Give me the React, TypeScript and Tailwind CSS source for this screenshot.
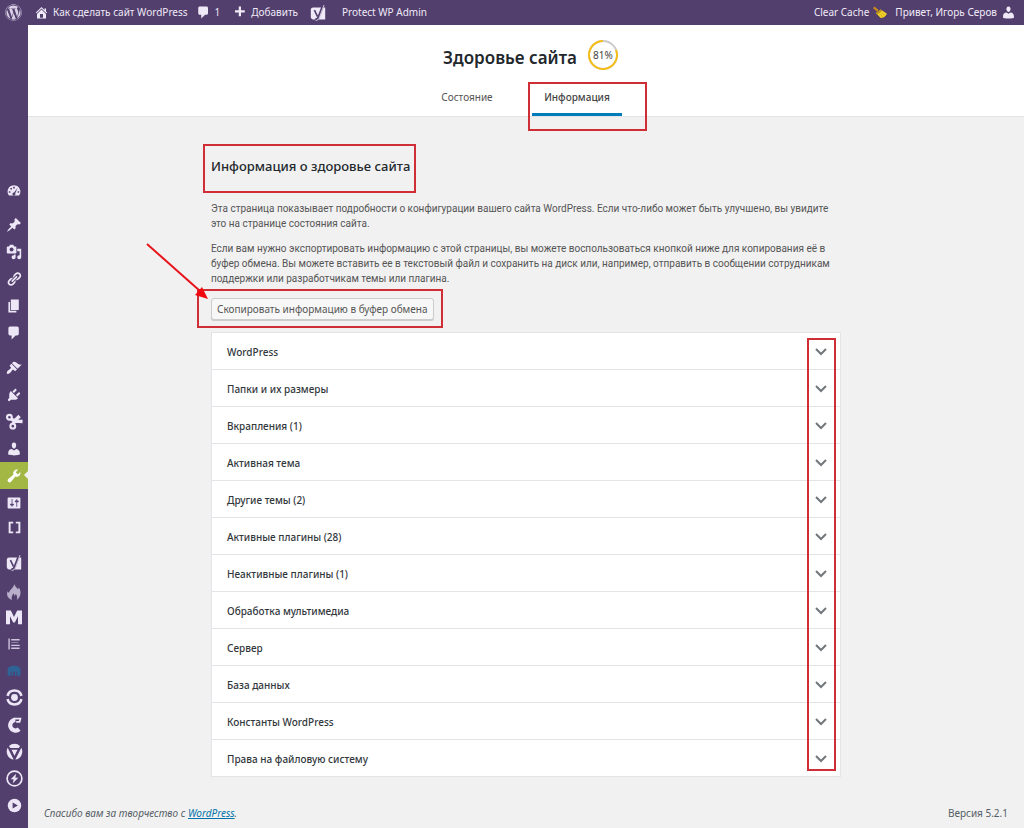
import type { ReactNode } from "react";
import { useState } from "react";
import { FaWordpress } from "react-icons/fa";

function cn(...classes: Array<string | false | null | undefined>) {
  return classes.filter(Boolean).join(" ");
}

const paths = {
  home: "M16 8.5l1.53 1.53-1.06 1.06L10 4.6l-6.47 6.49-1.06-1.06L10 2.5l4 4v-2h2v4zm-6-2.46l6 5.99V18H4v-5.97zM12 17v-5H8v5h4z",
  comment: "M5 2h9c1.1 0 2 .9 2 2v7c0 1.1-.9 2-2 2h-2l-5 5v-5H5c-1.1 0-2-.9-2-2V4c0-1.1.9-2 2-2z",
  plus: "M17 7v3h-5v5H9v-5H4V7h5V2h3v5h5z",
  user: "M10 9.25c-2.27 0-2.73-3.44-2.73-3.44C7 4.02 7.82 2 9.97 2c2.16 0 2.98 2.02 2.71 3.81 0 0-.41 3.44-2.68 3.44zm0 2.57L12.72 10c2.39 0 4.52 2.33 4.52 4.53v2.49s-3.65 1.13-7.24 1.13c-3.65 0-7.24-1.13-7.24-1.13v-2.49c0-2.25 1.94-4.48 4.47-4.48z",
  dashboard:
    "M3.76 17h12.48C17.58 15.37 18 13.58 18 12c0-4.42-3.58-8-8-8s-8 3.58-8 8c0 1.58.42 3.37 1.76 5zM9 6h2v2H9zM5.5 7.5h2v2h-2zM14.6 7.3l-3 6.7a1.9 1.9 0 1 1-1.5-1zM3.5 11.5h2v2h-2zM14.5 11.5h2v2h-2z",
  pin: "M10.44 3.02l1.82-1.82 6.36 6.35-1.83 1.82c-1.05-.68-2.48-.57-3.41.36l-.75.75c-.92.93-1.04 2.35-.35 3.41l-1.83 1.82-2.41-2.41-2.8 2.79c-.42.42-3.38 2.71-3.8 2.29s1.86-3.39 2.28-3.81l2.79-2.79L4.1 9.36l1.83-1.82c1.05.69 2.48.57 3.4-.36l.75-.75c.93-.92 1.05-2.35.36-3.41z",
  media:
    "M13 11V4c0-.55-.45-1-1-1h-1.67L9 1H5L3.67 3H2c-.55 0-1 .45-1 1v7c0 .55.45 1 1 1h10c.55 0 1-.45 1-1zM7 4.5c1.38 0 2.5 1.12 2.5 2.5S8.38 9.5 7 9.5 4.5 8.38 4.5 7 5.62 4.5 7 4.5zM14 6h5v10.5c0 1.38-1.12 2.5-2.5 2.5S14 17.88 14 16.5s1.12-2.5 2.5-2.5c.17 0 .34.02.5.05V9h-3V6zm-4 8.05V13h2v3.5c0 1.38-1.12 2.5-2.5 2.5S7 17.88 7 16.5 8.12 14 9.5 14c.17 0 .34.02.5.05z",
  link: "M17.74 2.76c1.68 1.69 1.68 4.41 0 6.1l-1.53 1.52c-1.12 1.12-2.7 1.47-4.14 1.09l2.62-2.61.76-.77.76-.76c.84-.84.84-2.2 0-3.04-.84-.85-2.2-.85-3.04 0l-.77.76-3.38 3.38c-.37-1.44-.02-3.02 1.1-4.14l1.52-1.53c1.69-1.68 4.42-1.68 6.1 0zM8.59 13.43l5.34-5.34c.42-.42.42-1.1 0-1.52-.44-.43-1.13-.39-1.53 0l-5.33 5.34c-.42.42-.42 1.1 0 1.52.44.43 1.13.39 1.52 0zm-.76 2.29l4.14-4.15c.38 1.44.03 3.02-1.09 4.14l-1.52 1.53c-1.69 1.68-4.41 1.68-6.1 0-1.68-1.68-1.68-4.42 0-6.1l1.53-1.52c1.12-1.12 2.7-1.47 4.14-1.1l-4.14 4.15c-.85.84-.85 2.2 0 3.05.84.84 2.2.84 3.04 0z",
  page: "M6 15V2h10v13H6zm-1 1h8v2H3V5h2v11z",
  brush:
    "M14.48 11.06L7.41 3.99l1.5-1.5c.5-.56 2.3-.47 3.51.32 1.21.8 1.43 1.28 2.91 2.1 1.18.64 2.45 1.26 4.45.85zm-.71.71L6.7 4.7 4.93 6.47c-.39.39-.39 1.02 0 1.41l1.06 1.06c.39.39.39 1.03 0 1.42-.6.6-1.43 1.11-2.21 1.69-.35.26-.7.53-1.01.84C1.43 14.23.4 16.08 1.4 17.07c.99 1 2.84-.03 4.18-1.36.31-.31.58-.66.85-1.02.57-.78 1.08-1.61 1.69-2.21.39-.39 1.02-.39 1.41 0l1.06 1.06c.39.39 1.02.39 1.41 0z",
  plug: "M13.11 4.36L9.87 7.6 8 5.73l3.24-3.24c.35-.34 1.05-.2 1.56.32.52.51.66 1.21.31 1.55zm-8 1.77l.91-1.12 9.01 9.01-1.19.84c-.71.71-2.63 1.16-3.82 1.16H6.14L4.9 17.26c-.59.59-1.54.59-2.12 0-.59-.58-.59-1.53 0-2.12l1.24-1.24v-3.88c0-1.13.4-3.19 1.09-3.89zm7.26 3.97l3.24-3.24c.34-.35 1.04-.21 1.55.31.52.51.66 1.21.31 1.55l-3.24 3.25z",
  wrench:
    "M16.68 9.77c-1.34 1.34-3.3 1.67-4.95.99l-5.41 6.52c-.99.99-2.59.99-3.58 0s-.99-2.59 0-3.57l6.52-5.42c-.68-1.65-.35-3.61.99-4.95 1.28-1.28 3.12-1.62 4.72-1.06l-2.89 2.89 2.82 2.82 2.86-2.87c.53 1.58.18 3.39-1.08 4.65z",
  sliders:
    "M18 16V4c0-.55-.45-1-1-1H3c-.55 0-1 .45-1 1v12c0 .55.45 1 1 1h14c.55 0 1-.45 1-1zM8 11h1c.55 0 1 .45 1 1s-.45 1-1 1H8v1.5c0 .28-.22.5-.5.5s-.5-.22-.5-.5V13H6c-.55 0-1-.45-1-1s.45-1 1-1h1V5.5c0-.28.22-.5.5-.5s.5.22.5.5V11zm5-2h-1c-.55 0-1-.45-1-1s.45-1 1-1h1V5.5c0-.28.22-.5.5-.5s.5.22.5.5V7h1c.55 0 1 .45 1 1s-.45 1-1 1h-1v5.5c0 .28-.22.5-.5.5s-.5-.22-.5-.5V9z",
  brackets: "M1 1h7v3H4v12h4v3H1zM12 1h7v18h-7v-3h4V4h-4z",
  flame:
    "M10.5 0c.5 3 3 4.5 4.5 6.5.6-.6.9-1.3 1-2 3 4 3.5 11-2.5 15.5 1-3.5.4-6-1.5-7.5-.2 1.2-.6 2-1.3 2.6-.2-1.6-.7-2.7-1.7-3.6-.5 2.5-2.7 4-1.5 8.5C1.5 17.5.5 13.5 2 9c.5.9 1.1 1.5 1.9 1.9C4.5 7 9.5 5 10.500 0z",
  monster: "M0 19V2h6l4 8 4-8h6v17h-5V9l-4 8H9L5 9v10z",
  toc: "M2 2h2v16H2zM6 3h12v2H6zM6 7h10v1H6zM6 11h12v2H6zM6 15h12v2H6z",
  cover: "M4 5c3-2 9-2 12 0 2 1 2 3 2 5v6h-4v-5h-1v5h-2v-5H9v5H7v-5H6v5H2v-6c0-2 0-4 2-5z",
};

type IconName = keyof typeof paths;

function Icon({ name, size = 16 }: { name: IconName; size?: number }) {
  return (
    <svg
      viewBox="0 0 20 20"
      width={size}
      height={size}
      fill="currentColor"
      fillRule="evenodd"
      className="shrink-0"
      aria-hidden="true"
    >
      <path d={paths[name]} />
    </svg>
  );
}

function YoastIcon() {
  return (
    <svg viewBox="0 0 20 20" width="16" height="16" className="shrink-0" aria-hidden="true">
      <path d="M4 3h15v15H4c-1.5 0-3-1-3-3V6c0-2 1.5-3 3-3z" fill="currentColor" />
      <path d="M16.5 0L11 14.5c-.9 2.5-2 3.8-4.5 4" fill="none" stroke="#523f6d" strokeWidth="3" />
      <path d="M17.5 0L12 15c-.9 2.5-2.5 4.3-5 4.5" fill="none" stroke="currentColor" strokeWidth="1" />
      <path d="M5.5 6.5l4 8" fill="none" stroke="#523f6d" strokeWidth="2" />
    </svg>
  );
}

function ScissorsIcon() {
  return (
    <svg viewBox="0 0 20 20" width="17" height="17" fill="none" stroke="currentColor" aria-hidden="true">
      <circle cx="4" cy="5" r="2.8" strokeWidth="2.5" />
      <circle cx="8" cy="15.5" r="2.8" strokeWidth="2.5" />
      <path d="M6 7l4.5 2.5 9 .5M8 13l2.5-4L16 3.5" strokeWidth="4" />
    </svg>
  );
}

function RoundelIcon() {
  return (
    <svg viewBox="0 0 20 20" width="17" height="17" fill="none" stroke="currentColor" aria-hidden="true">
      <path d="M1.8 8a8.5 8.5 0 0 1 16.4 0M1.8 12a8.5 8.5 0 0 0 16.4 0" strokeWidth="3" />
      <circle cx="10" cy="10" r="4" fill="currentColor" stroke="none" />
    </svg>
  );
}

function CrescentIcon() {
  return (
    <svg viewBox="0 0 20 20" width="17" height="17" fill="none" stroke="currentColor" aria-hidden="true">
      <path d="M15.5 15.5A6.3 6.3 0 1 1 11 4.5" strokeWidth="5" />
      <path d="M9 3h8l-1 4h-4" strokeWidth="2" />
    </svg>
  );
}

function TriangleIcon() {
  return (
    <svg viewBox="0 0 20 20" width="17" height="17" fill="currentColor" aria-hidden="true">
      <path d="M3.5 3.5a9.5 9.5 0 0 1 13 0L15 6H5z" />
      <path d="M2 5.5L9 19.5A9.5 9.5 0 0 1 2 5.5zM18 5.5L11 19.5A9.5 9.5 0 0 0 18 5.5z" />
      <path d="M6.5 8h7L10 15z" />
    </svg>
  );
}

function BoltIcon() {
  return (
    <svg viewBox="0 0 20 20" width="17" height="17" aria-hidden="true">
      <circle cx="10" cy="10" r="8.7" fill="none" stroke="currentColor" strokeWidth="2" />
      <path d="M12 4.5L5.5 11H9l-1 4.5L14.5 9H11z" fill="currentColor" />
    </svg>
  );
}

function PlayIcon() {
  return (
    <svg viewBox="0 0 20 20" width="15" height="15" aria-hidden="true">
      <circle cx="10" cy="10" r="9" fill="currentColor" />
      <path d="M7.5 6l7 4-7 4z" fill="#523f6d" />
    </svg>
  );
}

function BroomIcon() {
  return (
    <svg viewBox="0 0 20 20" width="14" height="14" className="shrink-0" aria-hidden="true">
      <path d="M1 2l6 5" stroke="#c98a1b" strokeWidth="3" />
      <path d="M4 10l7-5 9 6c-2 4-5 6-9 6z" fill="#f0cf26" />
      <path d="M4 10l7-5 2 2-7 5z" fill="#b8901d" />
      <path d="M11 12l3 4M13 10l3 3" stroke="#c9a51c" strokeWidth="1" />
    </svg>
  );
}

type MenuEntry = { label: string; icon: ReactNode; active?: boolean; className?: string };

const menuGroups: MenuEntry[][] = [
  [{ label: "Консоль", icon: <Icon name="dashboard" /> }],
  [
    { label: "Записи", icon: <Icon name="pin" /> },
    { label: "Медиафайлы", icon: <Icon name="media" /> },
    { label: "Ссылки", icon: <Icon name="link" /> },
    { label: "Страницы", icon: <Icon name="page" /> },
    { label: "Комментарии", icon: <Icon name="comment" /> },
  ],
  [
    { label: "Внешний вид", icon: <Icon name="brush" /> },
    { label: "Плагины", icon: <Icon name="plug" /> },
    { label: "Вкрапления", icon: <ScissorsIcon /> },
    { label: "Пользователи", icon: <Icon name="user" /> },
    { label: "Инструменты", icon: <Icon name="wrench" />, active: true },
    { label: "Настройки", icon: <Icon name="sliders" /> },
    { label: "Шорткоды", icon: <Icon name="brackets" size={13} />, className: "pb-1" },
  ],
  [
    { label: "SEO", icon: <YoastIcon /> },
    { label: "Кэш", icon: <Icon name="flame" />, className: "pt-1 text-[#b9aecb]" },
    { label: "Меню M", icon: <Icon name="monster" /> },
    { label: "Содержание", icon: <Icon name="toc" size={14} />, className: "text-[#cfc5de]" },
    { label: "Обложка", icon: <Icon name="cover" />, className: "text-[#2f6395]" },
    { label: "Резервные копии", icon: <RoundelIcon /> },
    { label: "Clearfy", icon: <CrescentIcon /> },
    { label: "Защита", icon: <TriangleIcon /> },
    { label: "Ускорение", icon: <BoltIcon /> },
    { label: "Свернуть меню", icon: <PlayIcon /> },
  ],
];

const sections = [
  "WordPress",
  "Папки и их размеры",
  "Вкрапления (1)",
  "Активная тема",
  "Другие темы (2)",
  "Активные плагины (28)",
  "Неактивные плагины (1)",
  "Обработка мультимедиа",
  "Сервер",
  "База данных",
  "Константы WordPress",
  "Права на файловую систему",
];

function AdminBar() {
  return (
    <header className="flex h-[25px] items-center justify-between bg-[#523f6d] pr-2 pl-[5px] whitespace-nowrap text-[#f0eaf8]">
      <nav className="flex items-center" aria-label="Панель инструментов">
        <a href="#about" aria-label="О WordPress">
          <FaWordpress className="size-[17px] text-[#d8cfe6]" />
        </a>
        <a href="#site" className="ml-3 flex items-center gap-1">
          <Icon name="home" size={15} />
          Как сделать сайт WordPress
        </a>
        <a href="#comments" className="ml-2 flex items-center gap-1">
          <Icon name="comment" size={15} />1
        </a>
        <a href="#new" className="ml-3 flex items-center gap-1">
          <Icon name="plus" size={15} />
          Добавить
        </a>
        <a href="#seo" className="ml-3" aria-label="SEO">
          <YoastIcon />
        </a>
        <a href="#protect" className="ml-4">
          Protect WP Admin
        </a>
      </nav>
      <div className="flex items-center gap-2">
        <a href="#cache" className="flex items-center gap-1">
          Clear Cache
          <BroomIcon />
        </a>
        <a href="#profile" className="flex items-center gap-1">
          Привет, Игорь Серов
          <Icon name="user" size={15} />
        </a>
      </div>
    </header>
  );
}

function SideMenu() {
  return (
    <nav className="w-7 shrink-0 bg-[#523f6d] pt-[151px] text-[#ece6f6]" aria-label="Главное меню">
      {menuGroups.map((group, index) => (
        <ul key={index} className="mb-2 last:-mt-[2px]">
          {group.map((item) => (
            <li key={item.label}>
              <a
                href="#menu"
                aria-label={item.label}
                className={cn(
                  "relative flex h-[27px] items-center justify-center",
                  item.active && "bg-[#a3b745] text-white",
                  item.className
                )}
              >
                {item.icon}
                {item.active && (
                  <span className="absolute top-[9px] right-0 border-y-4 border-r-4 border-y-transparent border-r-[#f1f1f1]" />
                )}
              </a>
            </li>
          ))}
        </ul>
      ))}
    </nav>
  );
}

function Score() {
  return (
    <div className="relative flex size-8 items-center justify-center">
      <svg viewBox="0 0 32 32" className="absolute inset-0" fill="none" strokeWidth="2" aria-hidden="true">
        <circle cx="16" cy="16" r="14" stroke="#ccc" />
        <circle
          cx="16"
          cy="16"
          r="14"
          stroke="#f5bd1a"
          pathLength={100}
          strokeDasharray="81 100"
          transform="rotate(-22 16 16)"
        />
      </svg>
      <span>81%</span>
    </div>
  );
}

// Red frame drawn over the part of the page it points at.
function Marker({ className }: { className: string }) {
  return <span className={cn("pointer-events-none absolute border-2 border-[#cf2e36]", className)} aria-hidden="true" />;
}

function PageHeader() {
  return (
    <div className="flex flex-col items-center border-b border-[#e2e4e7] bg-white pt-[14px]">
      <div className="flex items-center gap-[10px] pl-[10px]">
        <h1 className="pt-[5px] text-[17px] leading-[27px] font-semibold text-[#23282d]">Здоровье сайта</h1>
        <Score />
      </div>
      <nav className="mt-2 flex gap-5 pr-2" aria-label="Дополнительное меню">
        <a href="#status" className="flex h-[37px] w-[90px] justify-center pt-[10px] leading-4 text-[#555]">
          Состояние
        </a>
        <a
          href="#info"
          aria-current="page"
          className="relative flex h-[37px] w-[90px] justify-center border-b-[3px] border-[#007cba] pt-[10px] leading-4 font-medium text-[#444]"
        >
          Информация
          <Marker className="top-[3px] -right-[25px] -bottom-[18px] -left-1" />
        </a>
      </nav>
    </div>
  );
}

function HealthSections() {
  const [open, setOpen] = useState<string | null>(null);

  return (
    <div className="relative mt-3 border border-[#e2e4e7] bg-white">
      {sections.map((title) => (
        <h3 key={title} className="border-t border-[#e2e4e7] first:border-t-0">
          <button
            type="button"
            aria-expanded={open === title}
            onClick={() => setOpen(open === title ? null : title)}
            className="flex h-9 w-full items-center justify-between px-[15px] pt-[2px] text-left font-medium text-[#32373c]"
          >
            {title}
            <svg viewBox="0 0 12 8" className="-mr-[2px] h-2 w-3" fill="none" stroke="#72777c" strokeWidth="2" aria-hidden="true">
              <path d="M1 1l5 5 5-5" />
            </svg>
          </button>
        </h3>
      ))}
      <Marker className="top-[5px] right-1 bottom-[5px] w-[29px]" />
    </div>
  );
}

export default function App() {
  return (
    <div className="flex min-h-screen flex-col bg-[#f1f1f1] font-['Noto_Sans','Open_Sans',sans-serif] text-[10px] text-[#444]">
      <AdminBar />
      <div className="flex flex-1">
        <SideMenu />
        <div className="flex min-w-0 flex-1 flex-col">
          <PageHeader />
          <main className="mx-auto w-full max-w-[630px] flex-1 pt-9">
            <div className="relative">
              <h2 className="pt-[2px] text-[13px] leading-[22px] font-medium text-[#23282d]">Информация о здоровье сайта</h2>
              <Marker className="-top-[9px] -bottom-4 -left-2 w-[213px]" />
            </div>
            <div className="mt-6 space-y-[10px] font-[Roboto,'Noto_Sans',sans-serif] leading-[15px] text-[#555]">
              <p>
                Эта страница показывает подробности о конфигурации вашего сайта WordPress. Если что-либо может быть улучшено, вы увидите
                это на странице состояния сайта.
              </p>
              <p>
                Если вам нужно экспортировать информацию с этой страницы, вы можете воспользоваться кнопкой ниже для копирования её в
                буфер обмена. Вы можете вставить ее в текстовый файл и сохранить на диск или, например, отправить в сообщении сотрудникам
                поддержки или разработчикам темы или плагина.
              </p>
            </div>
            <div className="relative mt-3 flex">
              <button
                type="button"
                className="h-[22px] rounded-[3px] border border-[#ccc] bg-[#f7f7f7] px-[5px] leading-none text-[#555] shadow-[0_1px_0_#ccc]"
              >
                Скопировать информацию в буфер обмена
              </button>
              <Marker className="-top-[9px] -bottom-2 -left-[14px] w-[246px]" />
              <svg
                viewBox="0 0 64 58"
                className="pointer-events-none absolute -top-[56px] -left-[66px] h-[58px] w-16"
                aria-hidden="true"
              >
                <path d="M2 2l53 47" stroke="#e8141c" strokeWidth="2" />
                <path d="M63 57l-13-4 7-8z" fill="#f00a10" />
              </svg>
            </div>
            <HealthSections />
          </main>
          <footer className="flex items-center justify-between px-4 pt-7 pb-2 leading-4 text-[#555d66]">
            <p className="italic">
              Спасибо вам за творчество с{" "}
              <a href="https://wordpress.org/" className="text-[#0073aa] underline">
                WordPress
              </a>
              .
            </p>
            <p>Версия 5.2.1</p>
          </footer>
        </div>
      </div>
    </div>
  );
}
